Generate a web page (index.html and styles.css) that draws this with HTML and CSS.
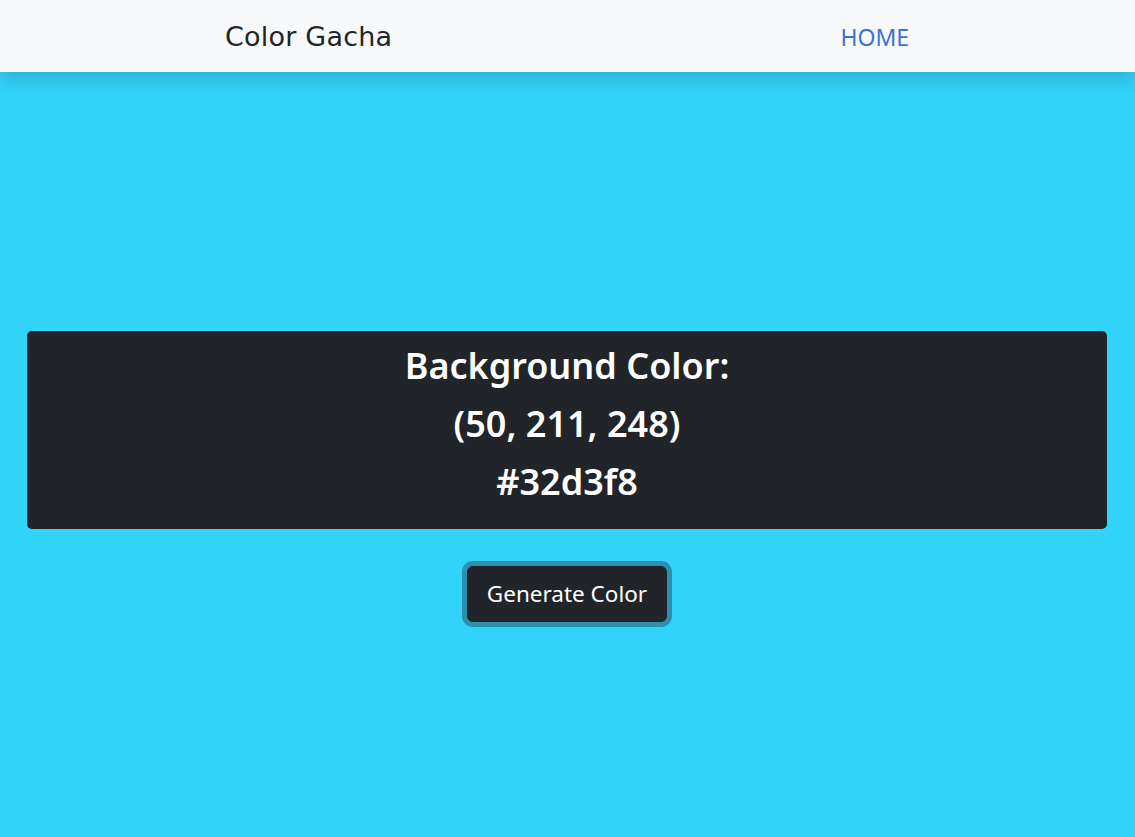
FILE: index.html
```html
<!DOCTYPE html>
<html lang="en">
<head>
<meta charset="utf-8">
<title>Color Gacha</title>
<link rel="stylesheet" href="styles.css">
</head>
<body>
<nav class="navbar">
  <div class="nav-left"><a class="brand" href="#">Color Gacha</a></div>
  <div class="nav-right"><a class="nav-link" href="#">HOME</a></div>
</nav>
<main class="main">
  <section class="card">
    <h2 class="line">Background Color:</h2>
    <h2 class="line">(50, 211, 248)</h2>
    <h2 class="line">#32d3f8</h2>
  </section>
  <button class="btn" type="button">Generate Color</button>
</main>
</body>
</html>
```
FILE: styles.css
```css
* { box-sizing: border-box; }
html, body { margin: 0; padding: 0; height: 100%; }
body {
  background: #32d3f8;
  font-family: "Noto Sans", "Open Sans", sans-serif;
  color: #fff;
  overflow: hidden;
}
.navbar {
  position: relative;
  z-index: 2;
  height: 72px;
  background: #f8f9fa;
  display: flex;
  align-items: center;
  box-shadow: 0 8px 16px rgba(0,0,0,0.15);
}
.nav-left { flex: 1 1 0; display: flex; padding-left: 225px; }
.nav-right { flex: 1 1 0; display: flex; padding-left: 321px; padding-top: 2px; }
.brand {
  font-family: "DejaVu Sans", sans-serif;
  font-size: 27px;
  color: #212529;
  text-decoration: none;
  letter-spacing: 0.2px;
}
.nav-link {
  font-family: "Noto Sans", sans-serif;
  font-size: 23px;
  color: #3a73d8;
  text-decoration: none;
}
.main {
  display: flex;
  flex-direction: column;
  align-items: center;
  padding: 259px 28px 0 27px;
}
.card {
  width: 100%;
  background: #212529;
  border-radius: 5px;
  padding: 13px 0 25px;
  display: flex;
  flex-direction: column;
  align-items: center;
  gap: 14px;
}
.line {
  margin: 0;
  font-size: 36px;
  font-weight: 600;
  line-height: 44px;
  color: #fff;
}
.btn {
  margin-top: 37px;
  background: #212529;
  color: #fff;
  border: 1px solid #212529;
  border-radius: 6px;
  font-family: "Noto Sans", sans-serif;
  font-size: 22.5px;
  line-height: 30px;
  padding: 12px 19px;
  box-shadow: 0 0 0 5px rgba(40,100,120,0.6);
}
```
